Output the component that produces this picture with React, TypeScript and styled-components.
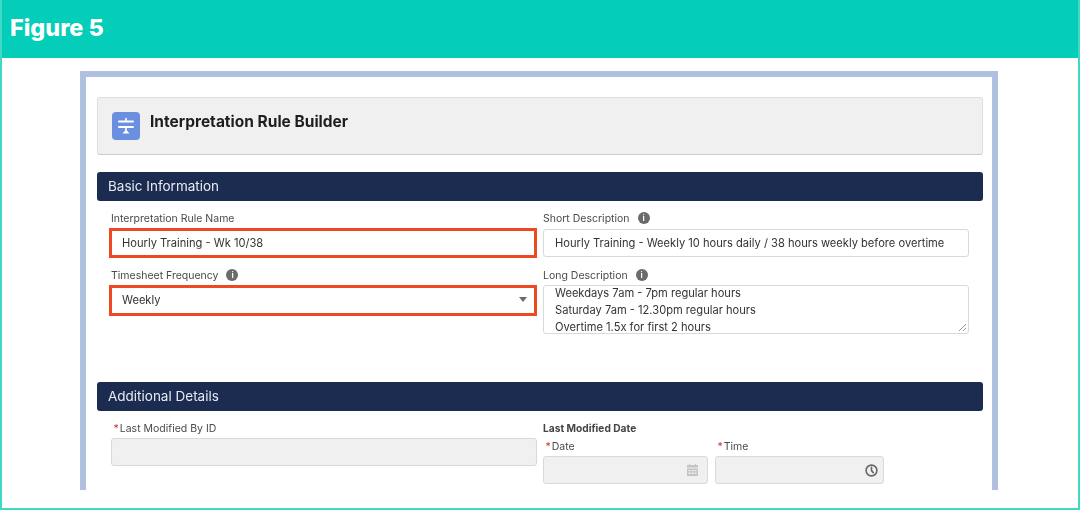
import React from "react";
import styled, { createGlobalStyle } from "styled-components";

const Global = createGlobalStyle`
  html, body { margin: 0; padding: 0; background: #fff; }
  body { font-family: Inter, "Liberation Sans", sans-serif; overflow: hidden; }
`;

const Page = styled.div`
  width: 1080px;
  height: 510px;
  box-sizing: border-box;
  display: flex;
  flex-direction: column;
  border: 2px solid #3fd9c6;
  border-top: none;
  overflow: hidden;
`;
const TopBar = styled.header`
  height: 58px;
  margin: 0 -2px;
  flex: none;
  background: #04cdb9;
  display: flex;
  align-items: center;
  padding: 0 10px 4px;
  box-sizing: border-box;
  color: #fff;
  font-size: 23.4px;
  font-weight: 800;
`;
const Frame = styled.main`
  margin: 13px 0 0 78px;
  width: 918px;
  height: 419px;
  box-sizing: border-box;
  border: 6px solid #b0c0e0;
  border-bottom: none;
  padding: 20px 9px 0 11px;
  display: flex;
  flex-direction: column;
  filter: blur(0.3px);
`;
const TitleCard = styled.div`
  height: 58px;
  box-sizing: border-box;
  background: #f0f0f0;
  border: 1px solid #dfdfdf;
  border-bottom-color: #cccccc;
  border-radius: 3px;
  display: flex;
  align-items: flex-start;
  gap: 10px;
  padding: 14px 14px 0;
`;
const TitleIcon = styled.div`
  width: 28px;
  height: 28px;
  border-radius: 4px;
  background: #6b8fdf;
  display: flex;
  align-items: center;
  justify-content: center;
`;
const Title = styled.h1`
  margin: 1px 0 0;
  font-size: 15.5px;
  line-height: 18px;
  font-weight: 700;
  color: #1e1e1e;
`;
const SectionBar = styled.div<{ $top: number }>`
  margin-top: ${(p) => p.$top}px;
  height: 29px;
  flex: none;
  background: #1b2c50;
  border-radius: 3px;
  color: #e8ebf1;
  font-size: 13.5px;
  line-height: 29px;
  padding-left: 11px;
`;
const Columns = styled.div<{ $height: number }>`
  display: grid;
  grid-template-columns: 426px 426px;
  column-gap: 6px;
  padding: 10px 0 0 14px;
  height: ${(p) => p.$height}px;
  box-sizing: border-box;
`;
const Column = styled.div`
  display: flex;
  flex-direction: column;
`;
const Label = styled.label<{ $gap?: number }>`
  display: flex;
  align-items: center;
  height: 14px;
  font-size: 10.5px;
  color: #4a4a4a;
  margin-top: ${(p) => p.$gap ?? 0}px;
  white-space: nowrap;
`;
const Star = styled.span`
  color: #d32f2f;
  margin: 0 1px 0 2.5px;
`;
const Info = styled.span`
  width: 12px;
  height: 12px;
  margin-left: 8px;
  border-radius: 50%;
  background: #6b6b6b;
  color: #fff;
  font-size: 8px;
  font-weight: 700;
  line-height: 12px;
  text-align: center;
`;
const Field = styled.div<{ $muted?: boolean; $pad?: number; $gap?: number }>`
  box-sizing: border-box;
  height: 28px;
  margin-top: ${(p) => p.$gap ?? 4}px;
  display: flex;
  align-items: center;
  justify-content: space-between;
  padding: 0 ${(p) => p.$pad ?? 10}px 0 11px;
  font-size: 11.14px;
  color: #333;
  background: ${(p) => (p.$muted ? "#f0f0f0" : "#fff")};
  border: 1px solid #d9d9d9;
  border-radius: 3px;
`;
const AccentField = styled.div<{ $height: number; $shift?: number }>`
  box-sizing: border-box;
  height: ${(p) => p.$height}px;
  margin: 3px 0 0 -2px;
  display: flex;
  align-items: center;
  justify-content: space-between;
  padding: 0 7px ${(p) => p.$shift ?? 0}px 10px;
  font-size: 11.14px;
  color: #333;
  background: #fff;
  border: 3px solid #ee4a22;
`;
const Caret = styled.span`
  width: 0;
  height: 0;
  border-left: 4px solid transparent;
  border-right: 4px solid transparent;
  border-top: 5px solid #6b6b6b;
`;
const TextArea = styled.div`
  box-sizing: border-box;
  position: relative;
  height: 49px;
  margin-top: 3px;
  padding: 0 11px;
  border: 1px solid #d9d9d9;
  border-radius: 3px;
  font-size: 11.14px;
  line-height: 17px;
  color: #333;
  overflow: hidden;
`;
const TextLines = styled.div`
  margin-top: -1px;
`;
const Resize = styled.svg`
  position: absolute;
  right: 1px;
  bottom: 1px;
`;
const BoldLabel = styled(Label)`
  font-size: 10.2px;
  font-weight: 700;
  color: #444;
`;
const DateRow = styled.div`
  display: flex;
  gap: 7px;
  margin-top: 4px;
`;
const DateCol = styled.div<{ $width: number }>`
  width: ${(p) => p.$width}px;
`;

const RuleIcon = () => (
  <svg width="20" height="20" viewBox="0 0 20 20" fill="none" stroke="#fff" strokeLinecap="round">
    <path d="M3 5.5h14M3 11h14" strokeWidth="2" />
    <path d="M10 2.5v3M10 11v3" strokeWidth="1.6" />
    <path d="M6.5 17.5h7L10 13.5z" fill="#fff" stroke="none" />
  </svg>
);
const CalendarIcon = () => (
  <svg width="11" height="12" viewBox="0 0 11 12" fill="#c4c4c4">
    <path d="M2 0h1v1h5V0h1v1h2v2.5H0V1h2zM0 4.5h11V12H0zM1.5 6v1.3h2V6zm3 0v1.3h2V6zm3 0v1.3h2V6zm-6 2.6v1.3h2V8.6zm3 0v1.3h2V8.6zm3 0v1.3h2V8.6z" />
  </svg>
);
const ClockIcon = () => (
  <svg width="13" height="13" viewBox="0 0 13 13" fill="none" stroke="#666" strokeWidth="1.6" strokeLinecap="round">
    <circle cx="6.5" cy="6.5" r="5.4" />
    <path d="M6.5 3.4v3.2l1.8 2" />
  </svg>
);

export default function App() {
  return (
    <>
      <Global />
      <Page>
        <TopBar>Figure 5</TopBar>
        <Frame>
          <TitleCard>
            <TitleIcon><RuleIcon /></TitleIcon>
            <Title>Interpretation Rule Builder</Title>
          </TitleCard>
          <SectionBar $top={17}>Basic Information</SectionBar>
          <Columns $height={181}>
            <Column>
              <Label>Interpretation Rule Name</Label>
              <AccentField $height={30}>Hourly Training - Wk 10/38</AccentField>
              <Label $gap={10}>Timesheet Frequency<Info>i</Info></Label>
              <AccentField $height={31} $shift={2}>Weekly<Caret /></AccentField>
            </Column>
            <Column>
              <Label>Short Description<Info>i</Info></Label>
              <Field>Hourly Training - Weekly 10 hours daily / 38 hours weekly before overtime</Field>
              <Label $gap={11}>Long Description<Info>i</Info></Label>
              <TextArea>
                <TextLines>
                  Weekdays 7am - 7pm regular hours<br />
                  Saturday 7am - 12.30pm regular hours<br />
                  Overtime 1.5x for first 2 hours
                </TextLines>
                <Resize width="9" height="9" viewBox="0 0 9 9" stroke="#999" strokeWidth="1">
                  <path d="M1 8l7-7M5 8l3-3" />
                </Resize>
              </TextArea>
            </Column>
          </Columns>
          <SectionBar $top={0}>Additional Details</SectionBar>
          <Columns $height={79}>
            <Column>
              <Label><Star>*</Star>Last Modified By ID</Label>
              <Field $muted $gap={3} />
            </Column>
            <Column>
              <BoldLabel>Last Modified Date</BoldLabel>
              <DateRow>
                <DateCol $width={165}>
                  <Label><Star>*</Star>Date</Label>
                  <Field $muted $gap={3} $pad={9}><span /><CalendarIcon /></Field>
                </DateCol>
                <DateCol $width={169}>
                  <Label><Star>*</Star>Time</Label>
                  <Field $muted $gap={3} $pad={5}><span /><ClockIcon /></Field>
                </DateCol>
              </DateRow>
            </Column>
          </Columns>
        </Frame>
      </Page>
    </>
  );
}
